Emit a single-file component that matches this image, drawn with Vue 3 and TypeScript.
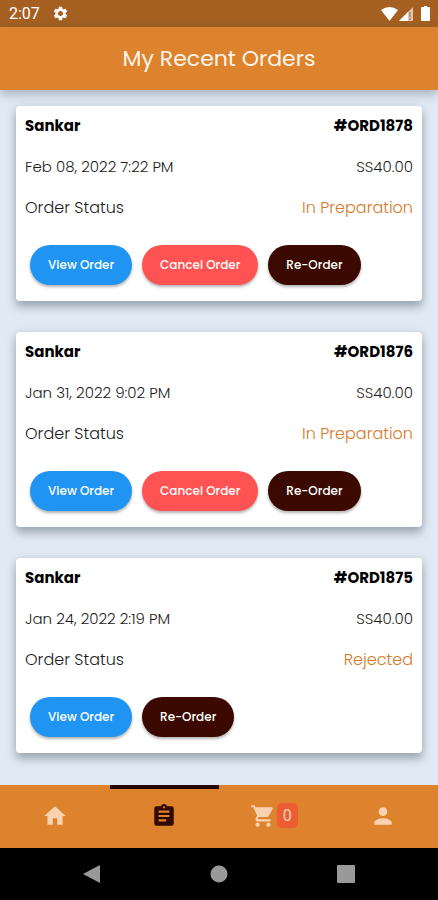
<script setup lang="ts">
interface Order {
  id: string
  customer: string
  placed: string
  total: string
  status: string
  cancellable: boolean
}

const orders: Order[] = [
  { id: '#ORD1878', customer: 'Sankar', placed: 'Feb 08, 2022 7:22 PM', total: 'SS40.00', status: 'In Preparation', cancellable: true },
  { id: '#ORD1876', customer: 'Sankar', placed: 'Jan 31, 2022 9:02 PM', total: 'SS40.00', status: 'In Preparation', cancellable: true },
  { id: '#ORD1875', customer: 'Sankar', placed: 'Jan 24, 2022 2:19 PM', total: 'SS40.00', status: 'Rejected', cancellable: false },
]
const cartCount = 0
</script>

<template>
  <div class="screen">
    <div class="status-bar">
      <span class="clock">2:07</span>
      <svg class="gear" viewBox="0 0 24 24" aria-hidden="true">
        <path d="M19.14 12.94c.04-.3.06-.61.06-.94 0-.32-.02-.64-.07-.94l2.03-1.58c.18-.14.23-.41.12-.61l-1.92-3.32c-.12-.22-.37-.29-.59-.22l-2.39.96c-.5-.38-1.03-.7-1.62-.94l-.36-2.54c-.04-.24-.24-.41-.48-.41h-3.84c-.24 0-.43.17-.47.41l-.36 2.54c-.59.24-1.13.57-1.62.94l-2.39-.96c-.22-.08-.47 0-.59.22L2.74 8.87c-.12.21-.08.47.12.61l2.03 1.58c-.05.3-.09.63-.09.94s.02.64.07.94l-2.03 1.58c-.18.14-.23.41-.12.61l1.92 3.32c.12.22.37.29.59.22l2.39-.96c.5.38 1.03.7 1.62.94l.36 2.54c.05.24.24.41.48.41h3.84c.24 0 .44-.17.47-.41l.36-2.54c.59-.24 1.13-.56 1.62-.94l2.39.96c.22.08.47 0 .59-.22l1.92-3.32c.12-.22.07-.47-.12-.61l-2.01-1.58zM12 15.6c-1.98 0-3.6-1.62-3.6-3.6s1.62-3.6 3.6-3.6 3.6 1.62 3.6 3.6-1.62 3.6-3.6 3.6z" />
      </svg>
      <div class="signals">
        <svg class="wifi" viewBox="0 0 17 14" aria-hidden="true"><path d="M0 3Q8.500-3 17 3L8.500 14Z" /></svg>
        <svg class="cell" viewBox="0 0 15 14" aria-hidden="true">
          <path d="M0 14L14 0V14Z" opacity=".65" />
          <path d="M0 14L9 5V14Z" />
          <path class="mark" d="M11 5V10M11 11V13" />
        </svg>
        <svg class="battery" viewBox="0 0 9 15" aria-hidden="true"><path d="M3 0H6V1H8Q9 1 9 2V14Q9 15 8 15H1Q0 15 0 14V2Q0 1 1 1H3Z" /></svg>
      </div>
    </div>

    <header class="app-bar"><h1>My Recent Orders</h1></header>

    <main class="orders">
      <article v-for="order in orders" :key="order.id" class="card">
        <div class="row strong"><h2>{{ order.customer }}</h2><span>{{ order.id }}</span></div>
        <div class="row"><span>{{ order.placed }}</span><span>{{ order.total }}</span></div>
        <div class="row status"><span>Order Status</span><span class="state">{{ order.status }}</span></div>
        <div class="actions">
          <button type="button" class="view">View Order</button>
          <button v-if="order.cancellable" type="button" class="cancel">Cancel Order</button>
          <button type="button" class="reorder">Re-Order</button>
        </div>
      </article>
    </main>

    <nav class="tabs">
      <a href="#home" aria-label="Home">
        <svg viewBox="0 0 24 24"><path d="M10 20v-6h4v6h5v-8h3L12 3 2 12h3v8z" /></svg>
      </a>
      <a href="#orders" class="active" aria-label="Orders" aria-current="page">
        <svg viewBox="0 0 24 24"><path d="M19 3h-4.180C14.400 1.840 13.300 1 12 1s-2.400.84-2.820 2H5c-1.100 0-2 .9-2 2v14c0 1.100.9 2 2 2h14c1.100 0 2-.9 2-2V5c0-1.100-.9-2-2-2zm-7 0c.55 0 1 .45 1 1s-.45 1-1 1-1-.45-1-1 .45-1 1-1zm2 14H7v-2h7v2zm3-4H7v-2h10v2zm0-4H7V7h10v2z" /></svg>
      </a>
      <a href="#cart" aria-label="Cart">
        <svg viewBox="0 0 24 24"><path d="M7 18c-1.100 0-1.990.9-1.990 2S5.900 22 7 22s2-.9 2-2-.9-2-2-2zM1 2v2h2l3.600 7.590-1.350 2.450c-.16.28-.25.61-.25.96 0 1.100.9 2 2 2h12v-2H7.420c-.14 0-.25-.11-.25-.25l.03-.12.9-1.630h7.450c.75 0 1.410-.41 1.750-1.030l3.580-6.490c.08-.14.12-.31.12-.48 0-.55-.45-1-1-1H5.210l-.94-2H1zm16 16c-1.100 0-1.990.9-1.990 2s.89 2 1.990 2 2-.9 2-2-.9-2-2-2z" /></svg>
        <span class="badge">{{ cartCount }}</span>
      </a>
      <a href="#profile" aria-label="Profile">
        <svg viewBox="0 0 24 24"><path d="M12 12c2.210 0 4-1.790 4-4s-1.790-4-4-4-4 1.790-4 4 1.790 4 4 4zm0 2c-2.670 0-8 1.340-8 4v2h16v-2c0-2.660-5.330-4-8-4z" /></svg>
      </a>
    </nav>

    <div class="system-bar">
      <button type="button" aria-label="Back"><svg viewBox="0 0 18 18"><path d="M0 9L17 0V18Z" /></svg></button>
      <button type="button" aria-label="Home screen"><svg viewBox="0 0 18 18"><circle cx="9" cy="9" r="8.500" /></svg></button>
      <button type="button" aria-label="Recent apps"><svg viewBox="0 0 18 18"><rect width="18" height="18" rx="1" /></svg></button>
    </div>
  </div>
</template>

<style>
body {
  margin: 0;
  background: #e1eaf4;
}
</style>

<style scoped>
.screen {
  display: flex;
  flex-direction: column;
  min-height: 100vh;
  background: #e1eaf4;
  color: #1c1c1c;
  font-family: Poppins, Inter, sans-serif;
}
svg {
  display: block;
  fill: currentColor;
}
h1,
h2 {
  margin: 0;
  font: inherit;
}
.status-bar {
  display: flex;
  align-items: center;
  box-sizing: border-box;
  height: 27px;
  padding: 0 8px 0 9px;
  background: #a45f21;
  color: #fff;
}
.clock {
  font: 16px/27px Roboto, sans-serif;
}
.gear {
  width: 17px;
  height: 17px;
  margin-left: 12px;
}
.signals {
  display: flex;
  align-items: center;
  gap: 1px;
  margin-left: auto;
}
.wifi {
  width: 17px;
  height: 14px;
}
.cell {
  width: 15px;
  height: 14px;
}
.mark {
  stroke: #a45f21;
  stroke-width: 1;
}
.battery {
  width: 9px;
  height: 15px;
  margin-left: 6px;
}
.app-bar {
  display: flex;
  align-items: center;
  justify-content: center;
  position: relative;
  height: 63px;
  background: #dd822d;
  color: #fff5ea;
  box-shadow: 0 4px 10px rgba(70, 90, 100, 0.4);
}
.app-bar h1 {
  font-size: 22px;
  line-height: 32px;
}
.orders {
  flex: 1;
  display: flex;
  flex-direction: column;
  gap: 31px;
  padding: 16px 16px 32px;
}
.card {
  display: flex;
  flex-direction: column;
  gap: 17px;
  padding: 8px 9px 16px;
  border-radius: 4px;
  background: #fff;
  box-shadow: 0 6px 10px rgba(50, 65, 75, 0.35), 0 1px 8px rgba(50, 65, 75, 0.14);
}
.row {
  display: flex;
  justify-content: space-between;
  font-size: 15px;
  font-weight: 300;
  line-height: 24px;
}
.strong {
  color: #000;
  font-weight: 700;
}
.status {
  font-size: 16px;
}
.state {
  color: #d57a2b;
}
.actions {
  display: flex;
  gap: 10px;
  padding: 8px 5px 0;
}
.actions button {
  height: 40px;
  padding: 0 18px;
  border: 0;
  border-radius: 20px;
  color: #fff;
  font: 500 12px/20px Poppins, Inter, sans-serif;
  box-shadow: 0 2px 3px rgba(0, 0, 0, 0.3);
}
.actions .view {
  background: #2094f3;
}
.actions .cancel {
  background: #ff5252;
}
.actions .reorder {
  background: #3b0900;
}
.tabs {
  display: grid;
  grid-template-columns: repeat(4, 1fr);
  height: 63px;
  background: #dd822d;
}
.tabs a {
  display: flex;
  align-items: center;
  justify-content: center;
  gap: 1px;
  box-sizing: border-box;
  border-top: 4px solid transparent;
  padding-bottom: 6px;
  color: #f9d2b0;
  text-decoration: none;
}
.tabs .active {
  border-top-color: #260700;
  color: #300900;
}
.tabs svg {
  width: 26px;
  height: 26px;
}
.badge {
  padding: 0 6px;
  border-radius: 5px;
  background: #ec5d34;
  color: #f9d2b0;
  font: 16px/25px Roboto, sans-serif;
}
.system-bar {
  display: flex;
  align-items: center;
  justify-content: space-between;
  height: 52px;
  padding: 0 19%;
  background: #000;
}
.system-bar button {
  padding: 0;
  border: 0;
  background: none;
  color: #999;
}
.system-bar svg {
  width: 18px;
  height: 18px;
}
</style>
